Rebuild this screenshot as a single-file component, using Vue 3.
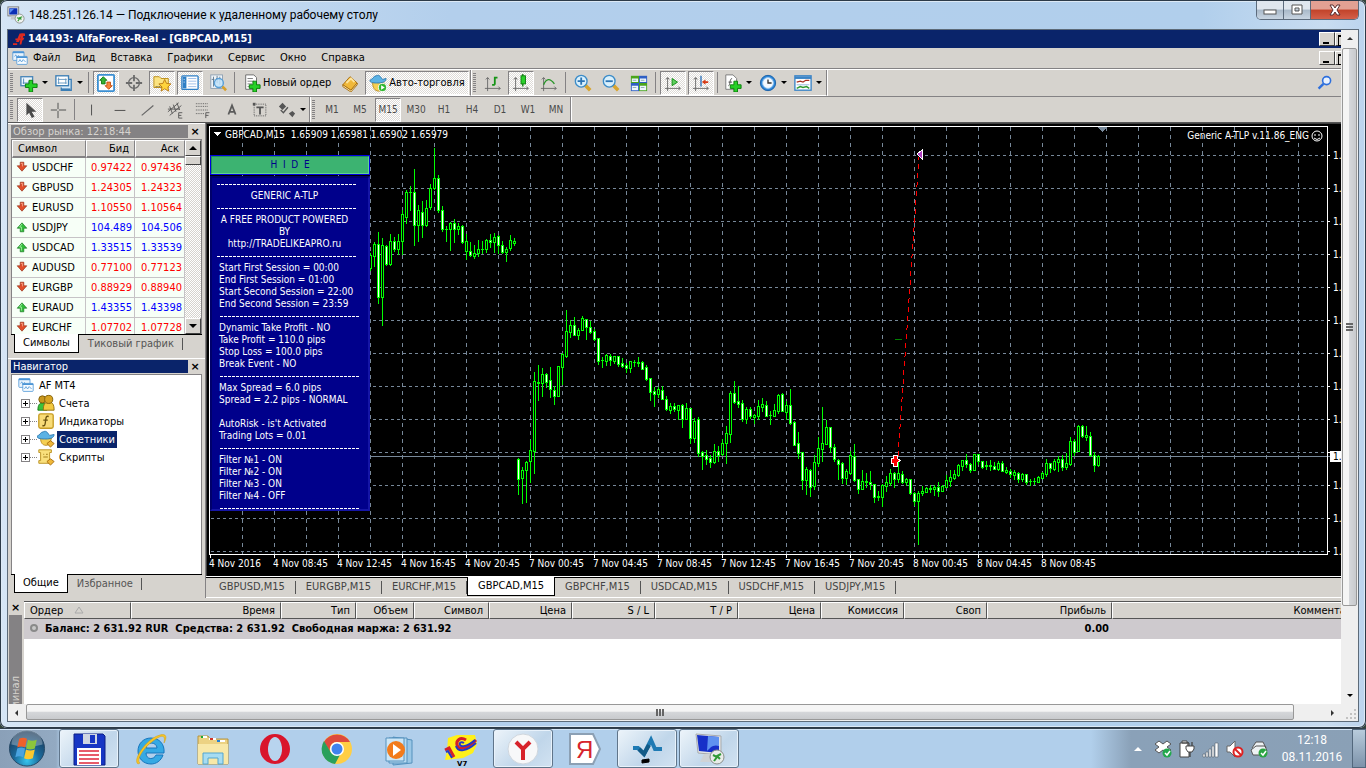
<script setup>
const icons = {
  rdp: '<rect x="1" y="1" width="12" height="10" fill="#e8eaec" stroke="#777" /><rect x="2.500" y="2.500" width="9" height="7" fill="#0b2fb5"/><path d="M3 3h5l-5 5z" fill="#5a8cf0"/><path d="M5 11h5l1 4H4z" fill="#c4c8cc"/><circle cx="14" cy="14" r="5" fill="#f1f3f1" stroke="#8b8f8b"/><path d="M11 13l3 1-2 3M17 12l-3 1 2 2" fill="none" stroke="#2f9a35" stroke-width="1.300"/>',
  alfa: '<path d="M0 17h7v3H0zM5 15l6-14h4l-5 14zM4 9h9v3H4zM14 1h6v4h-5zM13 8h6l-2 4h-4z" fill="#e02a20"/><path d="M14 1l-3 18h3l4-18z" fill="#e02a20"/>',
  charts: '<rect x="1" y="2" width="14" height="11" rx="1" fill="#eaf4fd" stroke="#4c95d6"/><path d="M1 3h14" stroke="#4c95d6" stroke-width="2"/><path d="M3 8l2-2 1 4 2-3 2 2" stroke="#4c95d6" fill="none"/><rect x="6" y="8" width="13" height="10" rx="1" fill="#f6fbff" stroke="#4c95d6"/><path d="M6 9h13" stroke="#4c95d6" stroke-width="2"/><path d="M8 15l2-3 2 3 2-3 3 3" stroke="#4c95d6" fill="none"/>',
  newchart: '<rect x="1" y="3" width="13" height="10" fill="#eef6fd" stroke="#4a86b8" stroke-width="1.500"/><path d="M4 5v6M3 10h9M10 8v3" stroke="#4a86b8" fill="none"/><path d="M10 7h4v4h5v4h-5v5h-4v-5H6v-4h4z" fill="#27d027" stroke="#087a08"/>',
  profiles: '<path d="M5 9V6h13v12H7v-3" fill="#d9ebf8" stroke="#3c7eb5" stroke-width="1.500"/><rect x="1" y="2" width="14" height="11" fill="#fff" stroke="#3c7eb5" stroke-width="1.500"/><path d="M4 4v7M3 6h10M3 10h10M12 5v6" stroke="#5f94bf" fill="none"/><path d="M7 16h10v2H7z" fill="#3c7eb5"/>',
  market: '<rect x="1" y="1" width="18" height="18" rx="1" fill="#fff" stroke="#3b8fd2" stroke-width="2"/><path d="M7 3l4 4H9v4H5V7H3z" fill="#35b233" stroke="#117a11"/><path d="M13 17l-4-4h2V9h4v4h2z" fill="#f7853b" stroke="#c34d0c"/>',
  cross: '<circle cx="10" cy="10" r="6" fill="none" stroke="#6b6b6b" stroke-width="1.500"/><path d="M10 1v7M10 12v7M1 10h7M12 10h7" stroke="#6b6b6b" stroke-width="2"/>',
  folder: '<path d="M1 3h6l2 2h8v10H1z" fill="#fbe381" stroke="#ba8a12"/><path d="M3 14h7" stroke="#333" stroke-dasharray="1 1"/><path d="M13 6l2 4.500 5 .5-3.500 3.500 1 4.500-4.500-2.500-4 2.500 1-4.500-3.500-3.500 4.500-.5z" fill="#ffd43c" stroke="#b97810"/>',
  navig: '<rect x="1" y="2" width="18" height="15" rx="1" fill="#fff" stroke="#2e7fc6" stroke-width="1.500"/><rect x="2" y="3" width="4" height="13" fill="#2e7fc6"/><path d="M8 5h9M8 8h9M8 11h9M8 14h9" stroke="#9abbe8"/><path d="M3 6h1M3 9h1" stroke="#fff"/>',
  tester: '<rect x="2" y="1" width="13" height="15" fill="#eef3f7" stroke="#8b9db0"/><path d="M5 3v11M9 2v8M12 3v9M3 6h3M8 5h5" stroke="#5d7890"/><circle cx="11" cy="10" r="5" fill="#bfe2fa" fill-opacity=".85" stroke="#5aa0d8" stroke-width="1.500"/><path d="M15 14l4 4" stroke="#d8a02c" stroke-width="3"/>',
  order: '<path d="M3 1h9l3 3v13H3z" fill="#fff" stroke="#666"/><path d="M5 5h6M5 8h7M5 11h5M5 14h3" stroke="#777"/><path d="M11 8h4v4h4v4h-4v4h-4v-4H7v-4h4z" fill="#27d027" stroke="#087a08"/>',
  book: '<path d="M2 12l8-9 8 7-7 8z" fill="#f0b83a" stroke="#a66a08"/><path d="M2 12l9 6 7-8v2l-7 8-9-6z" fill="#fff0bd" stroke="#a66a08"/><path d="M6 10l5-5 4 4" stroke="#ffe59b" stroke-width="2" fill="none"/>',
  robot: '<path d="M4 9c0 6 2 10 7 10s6-4 6-9z" fill="#f5cf52" stroke="#b98a18"/><path d="M1 7c3-1 4-5 7-5 4-2 5 2 7 4l4-1c0 4-5 5-9 5S1 10 1 7z" fill="#5bb2e4" stroke="#2b78b0"/><circle cx="15" cy="15" r="4.500" fill="#2fb62f" stroke="#fff"/><path d="M13.500 12.500v5l4-2.500z" fill="#fff"/>',
  bars: '<path d="M4 4v15M1 16h17M2 6l2-2 2 2M16 14l2 2-2 2" stroke="#666" fill="none"/><path d="M12 3v9M9 12h3M12 4h3" stroke="#159415" stroke-width="2" fill="none"/>',
  candles: '<path d="M4 4v15M1 16h17M2 6l2-2 2 2M16 14l2 2-2 2" stroke="#666" fill="none"/><path d="M12 0v14" stroke="#0c7c0c" stroke-width="1.500"/><rect x="10" y="2" width="5" height="9" fill="#2bd12b" stroke="#0c7c0c"/>',
  line: '<path d="M4 4v15M1 16h17M2 6l2-2 2 2M16 14l2 2-2 2" stroke="#666" fill="none"/><path d="M4 12c3-7 7-8 12-1" stroke="#2a962a" stroke-width="1.500" fill="none"/>',
  zin: '<path d="M12 12l6 6" stroke="#d9a52f" stroke-width="4"/><circle cx="8" cy="8" r="6.500" fill="#d9f0fc" stroke="#3c8cc8" stroke-width="1.500"/><path d="M8 4v8M4 8h8" stroke="#2c74b4" stroke-width="2"/>',
  zout: '<path d="M12 12l6 6" stroke="#d9a52f" stroke-width="4"/><circle cx="8" cy="8" r="6.500" fill="#d9f0fc" stroke="#3c8cc8" stroke-width="1.500"/><path d="M4 8h8" stroke="#2c74b4" stroke-width="2"/>',
  tile: '<rect x="1" y="2" width="9" height="8" fill="#4aa51c"/><rect x="10" y="2" width="9" height="8" fill="#2f5fc4"/><rect x="1" y="10" width="9" height="9" fill="#2f5fc4"/><rect x="10" y="10" width="9" height="9" fill="#4aa51c"/><path d="M2 5h7v4H2zM11 5h7v4h-7zM2 13h7v5H2zM11 13h7v5h-7z" fill="#eef6ff"/><path d="M3 7h4M12 7h4M3 15h4M12 15h4" stroke="#8aa"/>',
  scroll: '<path d="M4 4v15M1 16h17M2 6l2-2 2 2M16 14l2 2-2 2" stroke="#666" fill="none"/><path d="M9 5l6 4-6 4z" fill="#5fd05f" stroke="#0c8a0c"/>',
  shift: '<path d="M4 4v15M1 16h17M2 6l2-2 2 2M16 14l2 2-2 2" stroke="#666" fill="none"/><path d="M10 2v12" stroke="#2c6fb8" stroke-width="1.500"/><path d="M18 8h-3V6l-4 3 4 3v-2h3z" fill="#d63a16"/>',
  indic: '<path d="M2 1h8l4 4v12H2z" fill="#fff" stroke="#777"/><path d="M5 13c2 0 1-8 4-8M5 9h4" stroke="#444" fill="none"/><path d="M11 8h4v4h4v4h-4v4h-4v-4H7v-4h4z" fill="#27d027" stroke="#087a08"/>',
  clock: '<circle cx="10" cy="10" r="8.500" fill="#2d86d8" stroke="#155ca5"/><circle cx="10" cy="10" r="6" fill="#f5faff" stroke="#9cc8f0"/><path d="M10 6v4h4" stroke="#333" stroke-width="1.500" fill="none"/>',
  tmpl: '<rect x="1" y="2" width="18" height="16" fill="#fff" stroke="#3c84c6" stroke-width="1.500"/><path d="M1 4h18" stroke="#3c84c6" stroke-width="3"/><path d="M3 9l4-1 3 1 3-2h4" stroke="#a83020" stroke-width="1.500" fill="none"/><path d="M3 12h14" stroke="#8cb4d8"/><path d="M3 16l4-2 3 1 4-1 3 2" stroke="#2e9a2e" stroke-width="1.500" fill="none"/>',
  cursor: '<path d="M6 2v14l3-3 3 6 3-1.500-3-5.500h5z" fill="#4a4a4a"/>',
  plus: '<path d="M10 2v7M10 11v8M2 10h7M11 10h8" stroke="#444"/>',
  vline: '<path d="M9.500 4v12" stroke="#444"/>',
  hline: '<path d="M4 10.500h12" stroke="#444"/>',
  slash: '<path d="M3 16L16 5" stroke="#666" stroke-width="1.300"/>',
  channel: '<path d="M1 12L13 2M3 16L16 5M3 6l3 8M7 4l3 8M11 2l3 8M1 9h13" stroke="#555" fill="none"/><path d="M17 13h-4v6h4M13 16h3" stroke="#555" fill="none"/>',
  fibo: '<path d="M1 3h14M1 6h14M1 10h14M1 14h9" stroke="#555" stroke-dasharray="1 1"/><path d="M16 13h-4v6M12 16h3" stroke="#555" fill="none"/>',
  letterA: '<path d="M6 15l4-10 4 10M7 12h6" stroke="#5b5b5b" stroke-width="2" fill="none"/>',
  labelT: '<rect x="3.500" y="3.500" width="13" height="13" fill="none" stroke="#555" stroke-dasharray="1 1"/><path d="M6 7h8M10 7v8" stroke="#555" stroke-width="2"/><path d="M2 2h3v3H2z" fill="#555"/>',
  arrows: '<path d="M1 6l4-4 4 4-4 4zM12 14l4-3 3 3-3 4z" fill="#555"/><path d="M3 10l3 3 5-6" stroke="#555" stroke-width="1.500" fill="none"/>',
  search: '<circle cx="12" cy="7" r="5" fill="#e9f2ff" stroke="#2d6fdd" stroke-width="2"/><path d="M8 11l-6 6" stroke="#2d6fdd" stroke-width="3"/>',
  down: '<path d="M7 2h6v6h5l-8 9-8-9h5z" fill="#e2502c" stroke="#8a2208"/><path d="M8 4h3v5" stroke="#f6a58a" stroke-width="1.500" fill="none"/>',
  up: '<path d="M7 18h6v-6h5l-8-9-8 9h5z" fill="#32bd3c" stroke="#0c6c14"/><path d="M10 5l-4 5h3v6" stroke="#a6eda4" stroke-width="1.500" fill="none"/>',
  users: '<path d="M1 18c0-6 2-8 5-8s5 2 5 8z" fill="#3cc13c" stroke="#157a15"/><circle cx="6" cy="6" r="4" fill="#c9971d" stroke="#7a5a08"/><path d="M7 18c0-7 2-9 6-9s6 2 6 9z" fill="#f3c93e" stroke="#926d0c"/><circle cx="13" cy="6" r="4.500" fill="#d8a423" stroke="#7a5a08"/>',
  func: '<rect x="2" y="2" width="16" height="16" rx="2" fill="#f8dc78" stroke="#c79c24" stroke-width="1.500"/><path d="M13 5c-3-1-3 1-3.500 5S9 16 6 15M7 9h5" stroke="#6a5210" stroke-width="1.500" fill="none"/>',
  hat: '<path d="M4 9c0 5 2 8 6 8s5-3 6-8z" fill="#f5cf52" stroke="#b98a18"/><path d="M0 7c3-1 4-5 7-5 4-2 5 2 7 4l5-1c0 4-5 5-9 5S0 10 0 7z" fill="#5bb2e4" stroke="#2b78b0"/><path d="M11 15l4-3 4 3-4 4z" fill="#f0b83a" stroke="#a66a08"/>',
  script: '<path d="M2 2h14v3h-2v9h2v3H2v-3h2V5H2z" fill="#fae07c" stroke="#b98e1c"/><path d="M7 7h1M10 7h2M7 10h5" stroke="#9a7412"/><path d="M11 15l4-3 4 3-4 4z" fill="#f0b83a" stroke="#a66a08"/>',
}

const chartTools = [
  { n: 'Новый график', i: 'newchart', drop: true }, { n: 'Профили', i: 'profiles', drop: true }, { sep: true },
  { n: 'Обзор рынка', i: 'market', on: true }, { n: 'Окно данных', i: 'cross' }, { n: 'Навигатор', i: 'folder', on: true },
  { n: 'Терминал', i: 'navig', on: true }, { n: 'Тестер', i: 'tester' }, { sep: true },
  { n: 'Новый ордер', i: 'order', text: 'Новый ордер' }, { n: 'Редактор', i: 'book' }, { n: 'Авто-торговля', i: 'robot', text: 'Авто-торговля', on: true },
]
const viewTools = [
  { n: 'Бары', i: 'bars' }, { n: 'Свечи', i: 'candles', on: true }, { n: 'Линия', i: 'line' }, { sep: true },
  { n: 'Увеличить', i: 'zin' }, { n: 'Уменьшить', i: 'zout' }, { n: 'Окна', i: 'tile' }, { sep: true },
  { n: 'Автопрокрутка', i: 'scroll', on: true }, { n: 'Сдвиг', i: 'shift', on: true }, { sep: true },
  { n: 'Индикаторы', i: 'indic', drop: true }, { n: 'Периоды', i: 'clock', drop: true }, { n: 'Шаблоны', i: 'tmpl', drop: true },
]
const drawTools = [
  { n: 'Курсор', i: 'cursor', on: true }, { n: 'Перекрестие', i: 'plus' }, { sep: true },
  { n: 'Вертикальная линия', i: 'vline' }, { n: 'Горизонтальная линия', i: 'hline' }, { n: 'Трендовая линия', i: 'slash' },
  { n: 'Канал', i: 'channel' }, { n: 'Фибоначчи', i: 'fibo' }, { n: 'Текст', i: 'letterA' }, { n: 'Метка', i: 'labelT' },
  { n: 'Стрелки', i: 'arrows', drop: true },
]
const periodTools = ['M1', 'M5', 'M15', 'M30', 'H1', 'H4', 'D1', 'W1', 'MN'].map(p => ({ n: p, label: p, on: p === 'M15' }))
const toolRows = [[chartTools, viewTools], [drawTools, periodTools]]

const menu = ['Файл', 'Вид', 'Вставка', 'Графики', 'Сервис', 'Окно', 'Справка']
const quotes = [
  ['USDCHF', '0.97422', '0.97436', 'down'], ['GBPUSD', '1.24305', '1.24323', 'down'], ['EURUSD', '1.10550', '1.10564', 'down'],
  ['USDJPY', '104.489', '104.506', 'up'], ['USDCAD', '1.33515', '1.33539', 'up'], ['AUDUSD', '0.77100', '0.77123', 'down'],
  ['EURGBP', '0.88929', '0.88940', 'down'], ['EURAUD', '1.43355', '1.43398', 'up'], ['EURCHF', '1.07702', '1.07728', 'down'],
]
const tree = [['Счета', 'users'], ['Индикаторы', 'func'], ['Советники', 'hat'], ['Скрипты', 'script']]
const docs = ['GBPUSD,M15', 'EURGBP,M15', 'EURCHF,M15', 'GBPCAD,M15', 'GBPCHF,M15', 'USDCAD,M15', 'USDCHF,M15', 'USDJPY,M15']
const columns = ['Время', 'Тип', 'Объем', 'Символ', 'Цена', 'S / L', 'T / P', 'Цена', 'Комиссия', 'Своп', 'Прибыль', 'Комментарий']
const info = [
  '-', 'c:GENERIC A-TLP', '-', 'c:A FREE PRODUCT POWERED', 'c:BY', 'c:http://TRADELIKEAPRO.ru', '-',
  'Start First Session = 00:00', 'End First Session = 01:00', 'Start Second Session = 22:00', 'End Second Session = 23:59', '=',
  'Dynamic Take Profit - NO', 'Take Profit = 110.0 pips', 'Stop Loss = 100.0 pips', 'Break Event - NO', '=',
  'Max Spread = 6.0 pips', 'Spread = 2.2 pips - NORMAL', '', "AutoRisk - is't Activated", 'Trading Lots = 0.01', '=',
  'Filter №1 - ON', 'Filter №2 - ON', 'Filter №3 - ON', 'Filter №4 - OFF', '=',
]

// Each candle: high, body top, body bottom, low; a trailing "d" marks a falling bar.
const bars = `253 255 268 270|242 244 256 266|232 244 297 303d|238 245 297 325|245 246 264 265d|234 241 264 265|237 241 249 251d|234 241 249 254|210 214 241 254|190 192 217 223|186 192 192 210|169 192 225 245d|205 210 225 241|201 212 225 237d|200 208 225 226|184 188 207 209|148 178 188 189|175 178 210 212d|206 210 229 231d|226 229 229 241|222 223 229 250|219 223 229 242d|223 226 229 234|225 226 242 243d|234 241 251 259|242 251 255 256d|245 253 256 258|240 249 253 256|241 249 249 253|239 240 249 252|234 240 242 247d|233 237 242 252|235 236 245 253d|241 245 252 253d|247 249 252 261|235 240 248 250|238 241 243 245|458 459 479 494d|467 470 478 503|461 462 470 502|440 450 461 482|372 381 451 473|365 382 383 400|368 374 383 396|373 374 382 387d|367 380 389 397d|386 390 396 404d|366 366 396 396|353 354 367 384|310 331 356 357|320 325 332 337|317 325 335 335d|328 330 335 339|316 318 330 330|319 319 327 339d|321 327 332 333d|329 331 339 340d|338 338 361 364d|357 360 360 367|354 355 361 365|354 356 360 365d|356 356 361 363|356 356 364 366d|358 363 366 367d|363 365 368 372d|361 361 368 372|360 362 362 366|357 362 363 366|361 362 369 369d|365 367 379 380d|378 378 392 400d|387 391 394 406d|387 389 394 397|386 390 399 399d|396 399 409 410d|403 406 410 413|403 406 409 411d|405 405 410 419|404 405 419 427d|403 408 419 419|408 408 438 443d|418 421 438 442|417 419 453 456d|451 452 456 469d|450 455 459 464d|455 458 462 467d|444 451 462 463|446 451 455 461d|439 443 454 455|426 433 443 463|391 393 434 442|381 393 402 403d|386 401 404 407d|400 403 419 421d|407 409 419 423|407 409 416 418d|414 415 417 423|400 406 416 419|398 404 407 411|401 405 416 416d|411 415 415 424|404 410 416 416|394 395 411 413|393 394 411 411d|401 405 412 419|389 405 423 424d|421 422 445 445d|432 443 453 458d|452 452 480 489d|467 469 480 494|469 470 487 496d|455 462 486 489|437 448 463 466|407 443 449 461|420 427 444 444|427 427 447 452d|444 447 459 461d|459 460 464 479d|462 463 478 483d|469 471 478 484|451 455 473 474|444 456 480 481d|479 479 489 493d|470 481 489 489|473 481 482 487|471 482 484 489d|484 484 497 502d|491 496 497 500|484 485 497 506|476 482 486 491|469 473 483 485|472 473 479 487d|460 473 479 482|471 474 482 483d|478 479 482 485|479 479 493 494d|492 493 501 505d|491 493 501 544|486 491 493 495|487 488 492 492|485 488 489 492|485 487 489 495|482 487 491 496d|485 486 491 491|475 480 487 487|470 477 481 486|470 474 478 479|464 465 475 476|460 460 466 470|454 460 464 467d|463 464 470 472d|454 454 470 470|454 454 461 464d|461 461 467 468d|461 465 466 469|460 465 466 470|462 466 469 469d|461 463 469 470|461 463 471 471d|467 470 472 473|469 471 474 477d|470 472 475 479|472 473 479 482d|473 474 479 481|474 474 482 484d|479 481 481 485|478 481 481 484|476 477 482 482|472 473 478 478|459 463 474 476|463 463 468 472d|459 461 469 470|456 459 462 471|455 459 467 470d|453 463 467 469|437 441 464 465|439 441 452 455d|425 426 451 451|425 426 436 437d|426 435 437 440|432 436 455 456d|452 455 465 471d|455 456 465 466`.split('|')
const box = (x, y, w, h) => (h > 0 ? `M${x} ${y}h${w}v${h}h${-w}z` : '')
const shapes = { frame: '', hollow: '', filled: '' }
bars.forEach((bar, k) => {
  const [high, top, bottom, low] = bar.split(' ').map(v => parseInt(v))
  const x = 370 + 4 * k
  shapes.frame += box(x, high, 1, top - high) + box(x - 1, top, 3, bottom - top + 1) + box(x, bottom + 1, 1, low - bottom)
  shapes[bar.endsWith('d') ? 'filled' : 'hollow'] += box(x, top + 1, 1, bottom - top - 1)
})
const gridX = Array.from({ length: 34 }, (_, k) => 242 + 32 * k)
const gridY = Array.from({ length: 13 }, (_, k) => 155 + 33 * k)
const times = ['4 Nov 2016', '4 Nov 08:45', '4 Nov 12:45', '4 Nov 16:45', '4 Nov 20:45', '7 Nov 00:45', '7 Nov 04:45', '7 Nov 08:45', '7 Nov 12:45', '7 Nov 16:45', '7 Nov 20:45', '8 Nov 00:45', '8 Nov 04:45', '8 Nov 08:45']

const apps = [
  { n: 'Total Commander', open: true, s: '<path d="M3 3h29l2 2v29H3z" fill="#1736c4" stroke="#0c1e86"/><path d="M12 3h14v10H12z" fill="#cfd6e2"/><path d="M19 4h5v8h-5z" fill="#1736c4"/><path d="M6 17h24v17H6z" fill="#fff"/><path d="M8 20h20M8 24h20M8 28h20M8 32h20" stroke="#e0263a" stroke-width="1.500"/>' },
  { n: 'Internet Explorer', s: '<path d="M30 24c-2 6-7 9-12 9C10 33 5 27 5 20S10 7 18 7c8 0 14 6 13 15H13c0 7 8 7 10 2zM13 17h11c0-6-10-7-11 0z" fill="#35a9e4" fill-rule="evenodd" stroke="#1676bd"/><path d="M5 33C-1 29 14 7 27 4c7-2 7 3 4 8 2-9-3-8-11-2C9 18 3 30 7 32z" fill="#f7c526" stroke="#d19a0e" stroke-width=".5"/>' },
  { n: 'Проводник', s: '<path d="M3 8V5h10l2 3h18v25H3z" fill="#ecd283" stroke="#b6943f"/><path d="M6 6h6M14 8h7M22 10h8" stroke="#fff" stroke-width="2"/><path d="M6 6h2" stroke="#19aa35" stroke-width="2"/><path d="M15 8h3" stroke="#d23628" stroke-width="2"/><path d="M22 10h3" stroke="#2380d5" stroke-width="2"/><path d="M3 13h30v20H3z" fill="#f8e8a8"/><path d="M8 33V22h20v11h-5v-6H13v6z" fill="#a6dcf2" stroke="#55a6cf"/>' },
  { n: 'Opera', s: '<ellipse cx="18" cy="18" rx="11" ry="11" fill="none" stroke="#d9152b" stroke-width="8"/><ellipse cx="18" cy="18" rx="7" ry="12" fill="#b8d4ee"/>' },
  { n: 'Chrome', s: '<circle cx="18" cy="18" r="15" fill="#ffce44"/><path d="M5 11a15 15 0 0 1 26-0H18a7 7 0 0 0-6 11z" fill="#de4b3d"/><path d="M5 10a15 15 0 0 0 11 23l6-11c-4 3-9 2-11-2z" fill="#29a05c"/><circle cx="18" cy="18" r="7" fill="#fff"/><circle cx="18" cy="18" r="5.500" fill="#3f83ee"/>' },
  { n: 'Media Player', s: '<path d="M12 6l19 3v23l-19 2z" fill="#9ac7e6" stroke="#5491bd"/><path d="M8 7h18v25H8z" fill="#b6daf0" stroke="#5491bd"/><path d="M5 7h18v23H5z" fill="#cde7f7" stroke="#5491bd"/><circle cx="15" cy="19" r="9" fill="#f27b1b"/><path d="M12 13v12l8-6z" fill="#fff"/>' },
  { n: '1C', s: '<path d="M5 7l9-3 18 0 2 9-4 9-10 5-18 2 2-9z" fill="#fff01a"/><path d="M2 19l4-2 5 9" fill="none" stroke="#d52028" stroke-width="3"/><path d="M23 9c-6-4-10 1-9 5s8 6 19-5" fill="none" stroke="#d52028" stroke-width="3"/><path d="M21 12c-3-2-5 0-4 2s7 2 15-5M13 15c2 7 11 5 20-3" fill="none" stroke="#2038c8" stroke-width="2"/><path d="M3 21l2-1 4 7" fill="none" stroke="#2038c8" stroke-width="2"/>', v7: true },
  { n: 'Yandex Browser', open: true, s: '<circle cx="18" cy="18" r="15" fill="#f7f8f9" stroke="#cfd6dd"/><path d="M11 11l7 7 7-7M18 18v11" stroke="#d7232b" stroke-width="4" fill="none"/>' },
  { n: 'Yandex', s: '<path d="M3 3h23l7 15-7 15H3z" fill="#fff" stroke="#8ca0b4" stroke-width="2"/>', ya: true },
  { n: 'AlfaForex', open: true, s: '<path d="M4 17h5l6 6 7-14 4 9h7" fill="none" stroke="#1e7ab4" stroke-width="4"/><path d="M10 18l5 5 5-9" fill="none" stroke="#125a86" stroke-width="4"/><path d="M13 29l7-1v3l-7 1z" fill="#000" stroke="#000"/>' },
  { n: 'Remote Desktop', open: true, s: '<path d="M5 3l25 2v19L7 22z" fill="#e2e4e6" stroke="#a8abad"/><path d="M6 4l22 2v16L8 20z" fill="#1730c8"/><path d="M17 5l11 1v9c-6-2-9 2-12 5z" fill="#5f92f0"/><path d="M13 23h9l2 8H9z" fill="#d0d3d6"/><circle cx="26" cy="26" r="7" fill="#e9ece9" stroke="#8b8f8b"/><path d="M22 24l4 2-3 4M30 23l-4 2 3 3" fill="none" stroke="#2f9a35" stroke-width="2"/>' },
]
const trayIcons = [
  ['Dropbox', '<path d="M1 4l4-3 4 3 4-3 4 3-4 3 4 3-4 3-4-3-4 3-4-3 4-3z" fill="#fff" stroke="#555"/><circle cx="13" cy="13" r="4.500" fill="#22a84c"/><path d="M11 13l2 2 3-4" stroke="#fff" stroke-width="1.500" fill="none"/>'],
  ['Питание', '<path d="M2 3h9v14H2zM4 1h5v2H4z" fill="#fff" stroke="#444"/><path d="M8 6h8v3l-2 3h-4L8 9z" fill="#fff" stroke="#444"/><path d="M10 2v4M14 2v4M12 12v5" fill="none" stroke="#444" stroke-width="1.300"/>'],
  ['Сеть', '<path d="M1 14h2v3H1zM4 12h2v5H4zM7 9h2v8H7zM10 6h2v11h-2zM13 3h3v14h-3z" fill="#fff" stroke="#59636c" stroke-width=".6"/>'],
  ['Громкость', '<path d="M1 6h3l5-5v16l-5-5H1z" fill="#fff" stroke="#666"/><circle cx="12" cy="12" r="4.500" fill="#fff" stroke="#dd2222" stroke-width="2"/><path d="M9 9l6 6" stroke="#dd2222" stroke-width="2"/>'],
  ['Устройство', '<path d="M2 8l4-6h7l3 6M1 10l5-4h9l2 5-4 4H3z" fill="#eef2f4" stroke="#555"/><circle cx="13" cy="13" r="4.500" fill="#2aa541"/><path d="M11 13l2 2 3-4" stroke="#fff" stroke-width="1.500" fill="none"/>'],
]
</script>

<template>
  <div class="desktop">
    <main class="window">
      <header class="caption">
        <svg class="i18" viewBox="0 0 20 20" v-html="icons.rdp"></svg>
        <span class="captext">148.251.126.14 — Подключение к удаленному рабочему столу</span>
        <div class="capbtns">
          <button aria-label="Свернуть"><svg viewBox="0 0 16 12"><rect x="2" y="6" width="12" height="4" fill="#fff" stroke="#555" /></svg></button>
          <button aria-label="Развернуть"><svg viewBox="0 0 16 12"><path d="M3 1h10v9H3zM6 4v3h4V4z" fill="#fff" fill-rule="evenodd" stroke="#555" /></svg></button>
          <button class="close" aria-label="Закрыть"><svg viewBox="0 0 16 12"><path d="M3 1h3l2 3 2-3h3L10 6l3 5h-3L8 8l-2 3H3l3-5z" fill="#fff" stroke="#5b3030" /></svg></button>
        </div>
      </header>

      <div class="viewport">
        <div class="session">
          <div class="apptitle">
            <svg class="i12" viewBox="0 0 20 20" v-html="icons.alfa"></svg>
            <b>144193: AlfaForex-Real - [GBPCAD,M15]</b>
            <div class="mdi"><button aria-label="Свернуть"></button><button class="max" aria-label="Развернуть"></button></div>
          </div>
          <nav class="menu">
            <svg class="i16" viewBox="0 0 20 20" v-html="icons.charts"></svg>
            <button v-for="m in menu" :key="m">{{ m }}</button>
            <div class="mdi"><button aria-label="Свернуть окно"></button><button class="max" aria-label="Развернуть окно"></button></div>
          </nav>
          <div v-for="(row, r) in toolRows" :key="r" class="tools">
            <div v-for="(group, g) in row" :key="g" class="group">
              <i class="grip"></i>
              <template v-for="(t, k) in group" :key="k">
                <i v-if="t.sep" class="sep"></i>
                <button v-else class="tool" :class="{ on: t.on, drop: t.drop, wide: t.text }" :aria-label="t.n">
                  <svg v-if="t.i" class="i18" viewBox="0 0 20 20" v-html="icons[t.i]"></svg>
                  <span v-if="t.text" class="tooltext">{{ t.text }}</span>
                  <span v-if="t.label" class="period">{{ t.label }}</span>
                  <i v-if="t.drop" class="tri"></i>
                </button>
              </template>
            </div>
            <button v-if="r === 0" class="search" aria-label="Поиск"><svg class="i16" viewBox="0 0 20 20" v-html="icons.search"></svg></button>
          </div>

          <div class="work">
            <aside class="side">
              <section class="pane market">
                <div class="panehead"><span class="off">Обзор рынка: 12:18:44</span><button aria-label="Закрыть обзор">×</button></div>
                <div class="quotes">
                  <table>
                    <thead><tr><th>Символ</th><th>Бид</th><th>Аск</th></tr></thead>
                    <tbody>
                      <tr v-for="q in quotes" :key="q[0]">
                        <td><svg class="i12" viewBox="0 0 20 20" v-html="icons[q[3]]"></svg>{{ q[0] }}</td>
                        <td :class="q[3]">{{ q[1] }}</td>
                        <td :class="q[3]">{{ q[2] }}</td>
                      </tr>
                    </tbody>
                  </table>
                  <div class="oldscroll"><i class="sb"><i class="tri flip"></i></i><i class="thumb"></i><i class="sb end"><i class="tri"></i></i></div>
                </div>
                <div class="tabs"><button class="cur">Символы</button><button>Тиковый график</button></div>
              </section>
              <section class="pane nav">
                <div class="panehead"><span>Навигатор</span><button aria-label="Закрыть навигатор">×</button></div>
                <ul class="tree">
                  <li class="root"><svg class="i16" viewBox="0 0 20 20" v-html="icons.charts"></svg><span>AF MT4</span></li>
                  <li v-for="t in tree" :key="t[0]"><i class="exp"></i><i class="dots"></i><svg class="i18" viewBox="0 0 20 20" v-html="icons[t[1]]"></svg><span :class="{ sel: t[0] === 'Советники' }">{{ t[0] }}</span></li>
                </ul>
                <div class="tabs"><button class="cur">Общие</button><button>Избранное</button></div>
              </section>
            </aside>

            <section class="chartcol">
              <div class="chart">
                <svg class="plot" viewBox="207 124 1134 452" preserveAspectRatio="xMinYMin slice" shape-rendering="crispEdges">
                  <g stroke="#778899">
                    <path v-for="x in gridX" :key="x" :d="`M${x}.5 127V554`" stroke-dasharray="4 4" />
                    <path v-for="y in gridY" :key="y" :d="`M211 ${y}.5H1327`" stroke-dasharray="3 3" />
                  </g>
                  <path d="M210 456.500H1330" stroke="#778899" />
                  <path d="M209.500 126.500H1327.500V554.500H209.500z" stroke="#fff" fill="none" />
                  <path v-for="(t, k) in times" :key="t" :d="`M${210 + 64 * k}.5 555v3`" stroke="#fff" />
                  <path v-for="y in gridY" :key="y" :d="`M1328 ${y}.5h2`" stroke="#fff" />
                  <path :d="shapes.frame" fill="#00ff00" />
                  <path :d="shapes.hollow" fill="#000" />
                  <path :d="shapes.filled" fill="#fff" />
                  <path d="M898 456L919 157" stroke="#ff0000" stroke-dasharray="5 4" />
                  <path d="M895 339.500h7" stroke="#008000" />
                  <path d="M1098 127h9l-4 5h-1z" fill="#778899" />
                  <path d="M922 150v9l-5-5z" fill="#b040c0" stroke="#fff" />
                  <path d="M893 455h4v3l3 2.500-3 2.500v3h-4v-3h-2v-5h2z" fill="#ff0000" stroke="#fff" />
                  <path d="M213 132h8l-4 4z" fill="#fff" />
                  <g class="lbl">
                    <text x="225" y="138">GBPCAD,M15&#160; 1.65909 1.65981 1.65902 1.65979</text>
                    <text x="1309" y="139" text-anchor="end">Generic A-TLP v.11.86_ENG</text>
                    <text v-for="(t, k) in times" :key="t" :x="209 + 64 * k" y="567">{{ t }}</text>
                    <text v-for="y in gridY.filter(v => v !== 452)" :key="y" x="1333" :y="y + 4">1.</text>
                  </g>
                  <rect x="1330" y="451" width="11" height="11" fill="#fff" />
                  <text class="lbl dark" x="1333" y="460">1.</text>
                  <g shape-rendering="auto" fill="none" stroke="#fff"><circle cx="1317" cy="136" r="5" /><path d="M1315 134v2M1319 134v2M1314 138q3 3 6 0" /></g>
                </svg>
                <div class="robot">
                  <button class="hide">H&#160; I&#160; D&#160; E</button>
                  <div class="info">
                    <template v-for="(l, k) in info" :key="k">
                      <hr v-if="l === '-' || l === '='" :class="{ late: l === '=' }">
                      <p v-else :class="{ mid: l.startsWith('c:') }">{{ l.replace('c:', '') }}</p>
                    </template>
                  </div>
                </div>
              </div>
              <div class="docs"><button v-for="d in docs" :key="d" :class="{ cur: d === 'GBPCAD,M15' }">{{ d }}</button></div>
            </section>
          </div>

          <section class="terminal">
            <div class="tside"><button aria-label="Закрыть терминал">×</button><div class="strip"><span>Терминал</span></div></div>
            <div class="orders">
              <table>
                <colgroup><col class="c107"><col class="c150"><col class="c75"><col class="c58"><col class="c75"><col v-for="n in 6" :key="n" class="c83"><col class="c125"><col></colgroup>
                <thead><tr><th class="first">Ордер <svg class="sort" viewBox="0 0 10 8"><path d="M1 7l4-6 4 6z" fill="none" stroke="#aaa" /></svg></th><th v-for="(c, k) in columns" :key="k">{{ c }}</th></tr></thead>
                <tbody><tr><td colspan="11"><i class="dot"></i>Баланс: 2 631.92 RUR&#160; Средства: 2 631.92&#160; Свободная маржа: 2 631.92</td><td class="num">0.00</td><td></td></tr></tbody>
              </table>
            </div>
          </section>
        </div>
        <div class="vscroll"><i class="arr"><i class="tri flip"></i></i><i class="vthumb"><i class="lines"></i></i><i class="arr"><i class="tri"></i></i></div>
        <div class="hscroll"><i class="arr"><i class="tri left"></i></i><i class="hthumb"><i class="lines v"></i></i><i class="arr"><i class="tri right"></i></i></div>
        <div class="corner"><svg viewBox="0 0 17 17"><path d="M13 5h2v2h-2zM13 9h2v2h-2zM9 9h2v2H9zM13 13h2v2h-2zM9 13h2v2H9zM5 13h2v2H5z" fill="#c2c2c2" /></svg></div>
      </div>
    </main>

    <footer class="taskbar">
      <button class="start" aria-label="Пуск">
        <svg viewBox="0 0 40 40">
          <defs><radialGradient id="orb" cx=".5" cy=".85" r=".8"><stop offset="0" stop-color="#35c5ee" /><stop offset=".45" stop-color="#1c6b9c" /><stop offset="1" stop-color="#18395a" /></radialGradient></defs>
          <circle cx="20" cy="20" r="18" fill="url(#orb)" stroke="#274966" />
          <path d="M4 16a16 15 0 0 1 32 0q-16 5-32 0z" fill="#fff" fill-opacity=".3" />
          <path d="M12 10q4-2 8 0l-2 9q-4-2-8 0z" fill="#f0612b" /><path d="M21 11q4 2 9 0l-2 9q-5 2-9 0z" fill="#8cc63c" />
          <path d="M10 20q4-2 8 0l-2 9q-4-2-8 0z" fill="#4aa3e0" /><path d="M19 21q4 2 9 0l-2 9q-5 2-9 0z" fill="#fbc82f" />
        </svg>
      </button>
      <button v-for="a in apps" :key="a.n" class="app" :class="{ open: a.open }" :aria-label="a.n">
        <svg viewBox="0 0 36 36"><g v-html="a.s"></g><text v-if="a.v7" x="14" y="35" class="v7">V7</text><text v-if="a.ya" x="9" y="27" class="ya">Я</text></svg>
      </button>
      <div class="tray">
        <button class="more" aria-label="Скрытые значки"><i class="tri flip"></i></button>
        <button v-for="t in trayIcons" :key="t[0]" :aria-label="t[0]"><svg viewBox="0 0 18 18" v-html="t[1]"></svg></button>
      </div>
      <div class="time"><span>12:18</span><span>08.11.2016</span></div>
      <button class="peek" aria-label="Показать рабочий стол"></button>
    </footer>
  </div>
</template>

<style>
html, body { margin: 0; height: 100%; overflow: hidden; }
</style>

<style scoped>
* { box-sizing: border-box; }
i { font-style: normal; display: block; }
button { font: inherit; color: inherit; margin: 0; padding: 0; border: 0; background: none; }
svg { display: block; flex: none; }
.desktop { height: 100vh; display: flex; flex-direction: column; background: #33443a; font: 11px/14px "DejaVu Sans Condensed", "DejaVu Sans", sans-serif; color: #000; }
.i12 { width: 12px; height: 12px; }
.i16 { width: 16px; height: 16px; }
.i18 { width: 18px; height: 18px; }
.tri { width: 0; height: 0; border: 3px solid transparent; border-top-color: #000; border-bottom-width: 0; }
.tri.flip { border-top-width: 0; border-bottom: 3px solid #333; }
.tri.left { border: 3px solid transparent; border-right-color: #333; border-left-width: 0; }
.tri.right { border: 3px solid transparent; border-left-color: #333; border-right-width: 0; }

.window { flex: 1; min-height: 0; display: flex; flex-direction: column; padding: 0 7px 6px; border-radius: 7px; background: linear-gradient(90deg, #d5e5f5 0, #b3cfec 450px, #b1cfec 88%, #c8dcf0 97%, #bcd4ee); box-shadow: inset 0 0 0 1px #2c3a48, inset 0 0 0 2px #dce9f5; }
.caption { height: 29px; display: flex; align-items: center; color: #000; }
.captext { margin-left: 4px; font: 12px/16px Roboto, "Noto Sans", sans-serif; flex: 1; }
.capbtns { display: flex; align-self: flex-start; border: 1px solid #5c6b7c; border-top: 0; border-radius: 0 0 5px 5px; overflow: hidden; margin-top: 1px; }
.capbtns button { width: 27px; height: 18px; background: linear-gradient(#dfe6ee 45%, #a9b9c9 50%, #c8d5e2); border-right: 1px solid #5c6b7c; display: flex; align-items: center; justify-content: center; }
.capbtns svg { width: 16px; height: 12px; }
.capbtns .close { width: 47px; border: 0; background: linear-gradient(#e2a193 45%, #c2432a 50%, #d4604a); }
.viewport { flex: 1; min-height: 0; border: 1px solid #5d6b79; display: grid; grid-template-columns: minmax(0, 1fr) 17px; grid-template-rows: minmax(0, 1fr) 17px; }
.session { display: flex; flex-direction: column; background: #d6d3ce; overflow: hidden; }

.apptitle { height: 18px; flex: none; background: #0a246a; color: #fff; display: flex; align-items: center; padding-left: 5px; gap: 3px; }
.mdi { margin-left: auto; display: flex; margin-right: -10px; }
.mdi button { width: 16px; height: 14px; background: #d6d3ce; border: 1px solid #fff; border-right-color: #404040; border-bottom-color: #404040; padding: 8px 0 0 3px; }
.mdi button::after { content: ""; display: block; width: 6px; height: 2px; background: #000; }
.mdi .max { padding: 2px; }
.mdi .max::after { width: 9px; height: 8px; background: none; border: 1px solid #000; border-top-width: 2px; }
.menu { height: 22px; flex: none; display: flex; align-items: center; padding: 0 0 2px 4px; border-bottom: 1px solid #fff; box-shadow: inset 0 -1px #848284; }
.menu > button { margin-left: 15px; white-space: nowrap; }
.menu > svg + button { margin-left: 5px; }

.tools { height: 27px; flex: none; display: flex; border-bottom: 1px solid #848284; }
.tools + .tools { height: 26px; border-bottom: 1px solid #555; }
.group { display: flex; align-items: center; border-right: 1px solid #848284; border-bottom: 1px solid #fff; box-shadow: 1px 0 #fff; }
.tools + .tools .group { border-bottom: 0; }
.grip { width: 3px; height: 20px; margin: 0 3px 0 2px; background: repeating-linear-gradient(#848284 0 1px, #d6d3ce 1px 2px); }
.sep { width: 1px; height: 21px; margin: 0 3px 0 2px; background: #848284; }
.tool { width: 26px; height: 24px; margin: 0 1px; display: flex; align-items: center; justify-content: center; border: 1px solid transparent; color: #4a4a4a; }
.tool.on { border-color: #848284 #fff #fff #848284; background: repeating-conic-gradient(#fff 0 25%, #dedbd7 0 50%) 0 0/2px 2px; }
.tool.drop { width: 33px; gap: 4px; }
.tool.wide { width: auto; padding: 0 3px; color: #000; gap: 2px; }
.tooltext { white-space: nowrap; }
.period { font-size: 10px; }
.search { margin: 5px 8px 0 auto; height: 16px; }

.work { flex: 1; min-height: 0; display: flex; }
.side { width: 198px; flex: none; display: flex; flex-direction: column; border-right: 1px solid #848284; }
.pane { border-top: 1px solid #fff; padding: 1px 3px 4px; display: flex; flex-direction: column; }
.market { height: 235px; flex: none; }
.nav { flex: 1; min-height: 0; }
.panehead { height: 14px; flex: none; display: flex; }
.panehead span { flex: 1; height: 13px; line-height: 13px; padding-left: 2px; background: #0a246a; color: #fff; }
.panehead .off { background: #848284; color: #d6d3ce; }
.panehead button, .tside button { width: 14px; height: 13px; font: bold 11px/12px "DejaVu Sans", sans-serif; }
.quotes { flex: 1; min-height: 0; border: 1px solid #848284; border-bottom: 0; display: flex; background: #f7fff7; overflow: hidden; }
.quotes table { flex: 1; border-collapse: separate; border-spacing: 0; table-layout: fixed; height: 198px; }
.quotes th { height: 18px; padding: 1px 5px 0; background: #d6d3ce; font-weight: normal; text-align: right; border: 1px solid #fff; border-right-color: #848284; border-bottom: 2px solid #848284; }
.quotes th:first-child { text-align: left; width: 74px; }
.quotes th:nth-child(2) { width: 49px; }
.quotes td { height: 20px; padding: 0 2px; border-right: 1px solid #c6c3c6; border-bottom: 1px solid #c6c3c6; text-align: right; }
.quotes td:first-child { text-align: left; padding-left: 4px; white-space: nowrap; }
.quotes td svg { display: inline-block; vertical-align: -2px; margin-right: 4px; }
.quotes .down { color: #f00; }
.quotes .up { color: #00f; }
.oldscroll { width: 16px; display: flex; flex-direction: column; background: repeating-conic-gradient(#fff 0 25%, #d6d3ce 0 50%) 0 0/2px 2px; }
.sb, .thumb { height: 16px; background: #d6d3ce; border: 1px solid #fff; border-right-color: #404040; border-bottom-color: #404040; display: flex; align-items: center; justify-content: center; }
.sb .tri { border-left-width: 4px; border-right-width: 4px; border-top-width: 4px; }
.sb .tri.flip { border-top-width: 0; border-bottom: 4px solid #000; }
.thumb { height: 9px; }
.end { margin-top: auto; }
.tabs { height: 20px; flex: none; display: flex; border-top: 1px solid #000; color: #555; }
.tabs button { padding: 0 9px; height: 17px; white-space: nowrap; position: relative; }
.tabs button:not(.cur)::after { content: ""; position: absolute; right: 0; top: 3px; height: 12px; border-right: 1px solid #555; }
.tabs .cur { margin: -1px 0 0 3px; padding: 0 8px; height: 19px; background: #fff; color: #000; border: 1px solid #000; border-top: 0; }
.tree { flex: 1; margin: 0; padding: 1px 0 0 6px; list-style: none; background: #fff; border: 1px solid #848284; border-bottom: 0; }
.tree li { height: 18px; display: flex; align-items: center; padding-left: 3px; }
.tree .root { padding: 0; gap: 3px; }
.tree li span { padding: 0 2px; line-height: 17px; }
.tree .sel { background: #0a246a; color: #fff; }
.tree svg.i18 { margin-right: 2px; }
.exp { width: 9px; height: 9px; border: 1px solid #848284; background: linear-gradient(#000, #000) 1px 3px/5px 1px no-repeat, linear-gradient(#000, #000) 3px 1px/1px 5px no-repeat; }
.dots { width: 7px; border-top: 1px dotted #848284; }

.chartcol { flex: 1; min-width: 0; display: flex; flex-direction: column; }
.chart { flex: 1; min-height: 0; position: relative; background: #000; border-top: 1px solid #404040; border-left: 1px solid #404040; overflow: hidden; }
.plot { width: 100%; height: 100%; }
.lbl { fill: #fff; font: 10px "DejaVu Sans Condensed", sans-serif; white-space: pre; }
.dark { fill: #000; }
.robot { position: absolute; left: 3px; top: 31px; width: 160px; color: #fff; font: 10px/12px "DejaVu Sans Condensed", sans-serif; }
.hide { display: block; width: 100%; height: 20px; background: #3cb371; color: #00008b; border: 2px solid #1f9156; border-right-color: #5fd392; border-bottom-color: #5fd392; outline: 1px solid #0000e0; outline-offset: -1px; }
.info { height: 335px; overflow: hidden; background: #00008b; border: 2px solid #00006b; border-right-color: #1515a5; border-bottom-color: #1515a5; padding: 0 8px 0 7px; margin-top: 1px; }
.info p { margin: 0; height: 12px; white-space: nowrap; }
.info .mid { text-align: center; padding-right: 10px; }
.info hr { width: 140px; height: 1px; margin: 6px 0 5px -2px; border: 0; background: repeating-linear-gradient(90deg, #fff 0 3px, transparent 3px 4px); }
.info .late { margin-left: 1px; }
.docs { height: 22px; flex: none; display: flex; border-top: 1px solid #fff; border-bottom: 1px solid #fff; box-shadow: inset 0 1px #000; color: #444; padding-left: 3px; }
.docs button { padding: 0 11px 0 10px; height: 20px; position: relative; white-space: nowrap; }
.docs button:not(.cur)::after { content: ""; position: absolute; right: 0; top: 4px; height: 13px; border-right: 1px solid #555; }
.docs .cur { background: #fff; color: #000; border: 1px solid #000; border-top: 0; height: 19px; padding: 0 10px; }

.terminal { height: 106px; flex: none; display: flex; padding-top: 3px; }
.tside { width: 16px; padding-left: 1px; display: flex; flex-direction: column; }
.tside button { height: 13px; margin-bottom: 1px; width: 13px; }
.strip { width: 13px; flex: 1; min-height: 0; overflow: hidden; background: #848284; color: #d6d3ce; padding-top: 61px; }
.strip span { display: block; writing-mode: vertical-rl; transform: rotate(180deg); line-height: 13px; white-space: nowrap; }
.orders { flex: 1; min-width: 0; overflow: hidden; background: #fff; border-top: 1px solid #555; }
.orders table { width: calc(100% + 30px); table-layout: fixed; border-collapse: separate; border-spacing: 0; }
.orders th { height: 17px; padding: 0 5px; font-weight: normal; text-align: right; background: #d6d3ce; border: 1px solid #fff; border-right: 1px solid #555; border-bottom: 1px solid #555; white-space: nowrap; }
.orders .first { text-align: left; }
.sort { display: inline-block; width: 10px; height: 8px; margin-left: 8px; }
.orders td { height: 20px; padding: 0 3px 0 6px; background: #cecace; font-weight: bold; white-space: nowrap; }
.orders .num { text-align: right; }
.dot { display: inline-block; width: 8px; height: 8px; border: 2px solid #8a8a8a; border-radius: 4px; margin-right: 7px; background: #c8c8c8; }
.c107 { width: 107px; } .c150 { width: 150px; } .c75 { width: 75px; } .c58 { width: 58px; } .c83 { width: 83px; } .c125 { width: 125px; }

.vscroll, .hscroll { display: flex; background: #efefef; }
.vscroll { flex-direction: column; }
.arr { width: 17px; height: 17px; display: flex; align-items: center; justify-content: center; }
.vthumb, .hthumb { display: flex; align-items: center; justify-content: center; border: 1px solid #989898; border-radius: 2px; }
.vthumb { height: 558px; margin: 1px 1px auto; background: linear-gradient(90deg, #f5f5f5 45%, #d5d7da 50%, #c8cacd); }
.hthumb { flex: 1; margin: 0 30px 1px 1px; background: linear-gradient(#f5f5f5 45%, #d5d7da 50%, #c8cacd); }
.lines { width: 7px; height: 8px; background: repeating-linear-gradient(#666 0 2px, transparent 2px 3px); }
.lines.v { width: 8px; height: 7px; background: repeating-linear-gradient(90deg, #666 0 2px, transparent 2px 3px); }
.corner { background: #efefef; }
.corner svg { width: 17px; height: 17px; }

.taskbar { height: 40px; flex: none; display: flex; align-items: stretch; background: linear-gradient(90deg, #8aa0b8 0, #93aac2 56px, #b1cfeb 62px, #b1cfeb calc(100% - 275px), #8aa1b8 calc(100% - 235px), #8aa0b6); border-top: 1px solid #33404d; box-shadow: inset 0 1px #d3e4f5; }
.start { width: 59px; padding-left: 7px; }
.start svg { width: 40px; height: 39px; }
.app { width: 60px; margin-right: 2px; display: flex; align-items: center; justify-content: center; border: 1px solid transparent; border-radius: 3px; }
.app svg { width: 36px; height: 36px; }
.app.open { border-color: #60758a; background: linear-gradient(135deg, #edf4fa, #c0d6ea 60%, #d2e2f1); box-shadow: inset 0 0 0 1px #e8f2fb; }
.v7 { font: bold 7px "DejaVu Sans", sans-serif; }
.ya { font: 24px "Liberation Sans", sans-serif; fill: #d7232b; }
.tray { margin-left: auto; display: flex; align-items: center; gap: 6px; }
.tray svg { width: 18px; height: 18px; }
.more { padding: 0 6px; }
.more .tri { border-width: 0 4px 4px; border-bottom-color: #fff; }
.time { width: 80px; margin-left: 4px; display: flex; flex-direction: column; align-items: center; color: #fff; font: 12px/17px Roboto, "Noto Sans", sans-serif; padding-top: 3px; }
.peek { width: 14px; border: 1px solid #52677c; background: linear-gradient(#b8cbdc, #7d93aa); }
</style>
